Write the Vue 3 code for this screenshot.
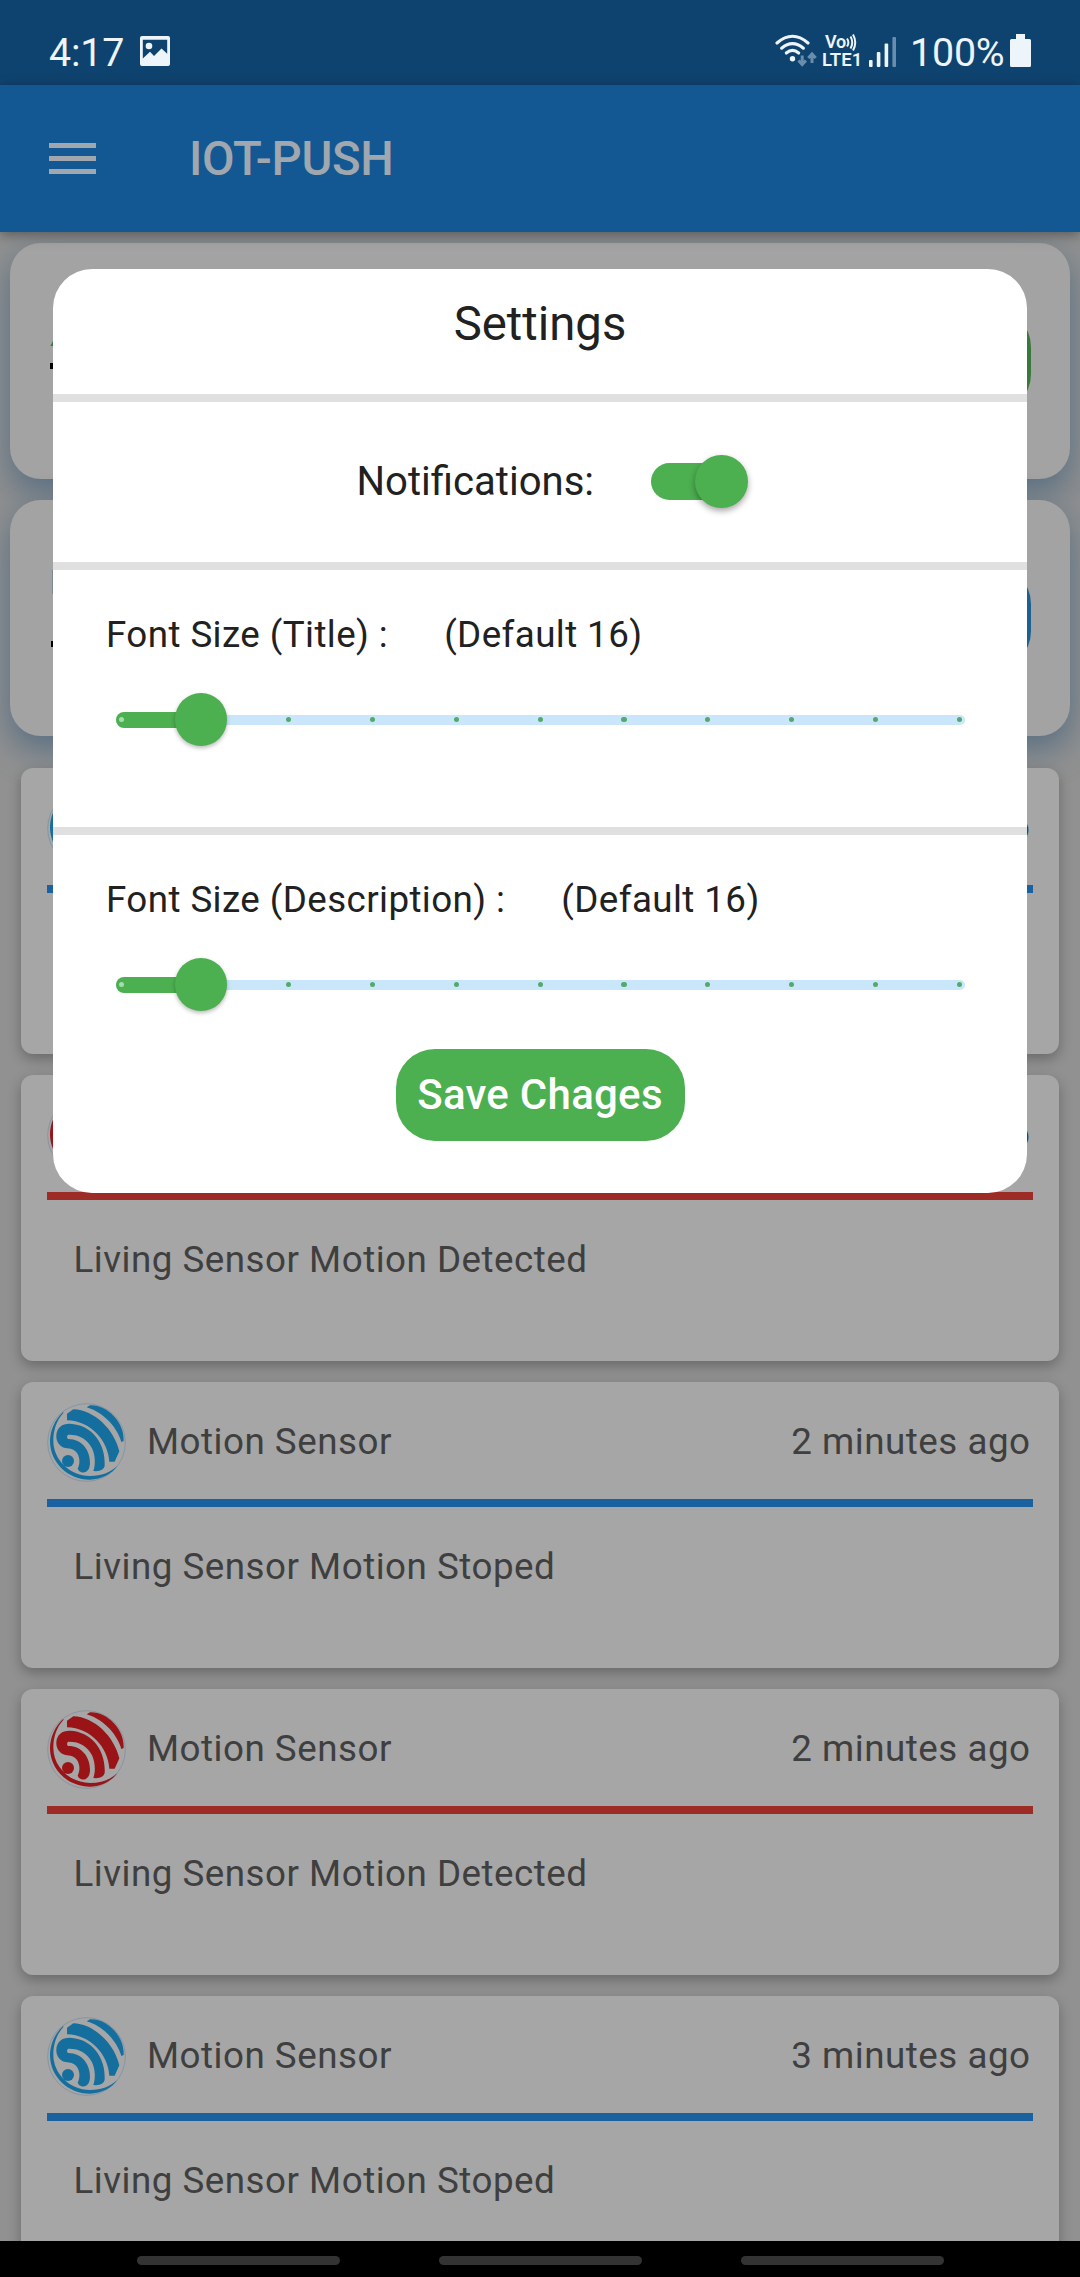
<script setup>
const events = [
  { tone: 'blue', ago: '1 minutes ago', text: 'Living Sensor Motion Stoped' },
  { tone: 'red', ago: '1 minutes ago', text: 'Living Sensor Motion Detected' },
  { tone: 'blue', ago: '2 minutes ago', text: 'Living Sensor Motion Stoped' },
  { tone: 'red', ago: '2 minutes ago', text: 'Living Sensor Motion Detected' },
  { tone: 'blue', ago: '3 minutes ago', text: 'Living Sensor Motion Stoped' },
]
const sliders = ['Title', 'Description']
</script>

<template>
  <div class="phone">
    <header class="status">
      <span class="clock">4:17</span>
      <svg class="photo" viewBox="0 0 30 30">
        <path fill-rule="evenodd" d="M2 0H28Q30 0 30 2V28Q30 30 28 30H2Q0 30 0 28V2Q0 0 2 0ZM2.8 3.8V22.5L10 15.8L14 20L21.5 12.5L27.2 17.8V3.8Z" />
        <circle cx="9" cy="10" r="3.3" />
      </svg>
      <span class="spacer" />
      <svg class="wifi" viewBox="0 0 42 34">
        <g fill="none" stroke="#edf4fa" stroke-width="3.1" stroke-linecap="round">
          <path d="M2 9Q17.500 -4.500 33 9" />
          <path d="M6.600 14.200Q17.500 5 28.400 14.200" />
          <path d="M11.300 19Q17.500 13.600 23.700 19" />
        </g>
        <circle cx="17.500" cy="24.800" r="2.700" fill="#edf4fa" />
        <g fill="none" stroke="#6a8dad" stroke-width="3">
          <path d="M27.200 21.500V30M23.500 26.500L27.200 30.500L30.900 26.500M37 29V20.500M33.300 24L37 20L40.700 24" />
        </g>
      </svg>
      <span class="volte">
        <span class="vo">Vo<svg viewBox="0 0 11 17"><path d="M1 4.500Q3.800 8.500 1 12.500M4.500 2.500Q8 8.500 4.500 14.500M7 .500Q11.500 8.500 7 16.500" /></svg></span>
        <span class="lte">LTE1</span>
      </span>
      <svg class="signal" viewBox="0 0 27 30">
        <rect x="0" y="23" width="3.600" height="7" rx="1" />
        <rect x="7.800" y="15" width="3.600" height="15" rx="1" />
        <rect x="15.600" y="6.500" width="3.600" height="23.500" rx="1" />
        <rect x="23.400" y="0" width="3.600" height="30" rx="1" fill="#6a8dad" />
      </svg>
      <span class="percent">100%</span>
      <svg class="battery" viewBox="0 0 21 33"><path d="M6 0H15V5H19.500Q21 5 21 6.500V31.500Q21 33 19.500 33H1.500Q0 33 0 31.500V6.500Q0 5 1.500 5H6Z" /></svg>
    </header>

    <nav class="appbar">
      <span class="menu"><i /><i /><i /></span>
      <h1>IOT-PUSH</h1>
    </nav>

    <main class="content">
      <section class="device">
        <span class="marks"><i class="tip" /><i class="dash" /></span>
        <span class="action green" />
      </section>
      <section class="device">
        <span class="marks second"><i class="bar" /><i class="dash" /></span>
        <span class="action azure" />
      </section>

      <article v-for="(e, i) in events" :key="i" class="event" :class="e.tone">
        <div class="head">
          <svg class="logo" viewBox="51 99 237 237">
            <circle cx="169.500" cy="217.500" r="116.500" fill="none" stroke="#7e91a2" stroke-width="2.400" />
            <g fill="currentColor">
              <path d="M100 125C73 150 60 183 60 215C61 277 113 329 180 329C215 328 245 312 262 288C240 308 215 318 180 318C118 317 70 268 70 212C70 181 79 152 100 129Z" />
              <path d="M170 112L180 106C230 103 284 156 281 213L274 216C265 180 226 128 170 112Z" />
              <path d="M111 131L130 118C193 120 253 179 268 244L254 275L238 275C234 211 182 153 111 151Z" />
              <path d="M79 197C80 171 99 160 120 161C185 164 228 220 224 288Q220 306 190 303C197 284 196 257 186 235C172 207 148 193 114 194Q108 201 114 207C154 206 182 240 180 283Q177 311 154 307Q146 305 143 296C151 280 149 264 143 252C134 237 121 236 106 234C90 231 78 215 79 197Z" />
              <circle cx="114" cy="273" r="18" />
            </g>
          </svg>
          <span class="name">Motion Sensor</span>
          <span class="ago">{{ e.ago }}</span>
        </div>
        <div class="rule" />
        <p>{{ e.text }}</p>
      </article>
    </main>

    <footer class="navbar"><i /><i /><i /></footer>

    <div class="dialog">
      <h2>Settings</h2>
      <div class="notify">
        <span>Notifications:</span>
        <span class="switch"><i /></span>
      </div>
      <div v-for="s in sliders" :key="s" class="size">
        <div class="caption"><span>Font Size ({{ s }}) :</span><span>(Default 16)</span></div>
        <div class="slider">
          <div class="active" />
          <div class="ticks"><i v-for="n in 11" :key="n" /></div>
          <div class="thumb" />
        </div>
      </div>
      <button>Save Chages</button>
    </div>
  </div>
</template>

<style>
body { margin: 0; }
</style>

<style scoped>
* { box-sizing: border-box; }
.phone {
  position: relative;
  display: flex;
  flex-direction: column;
  width: 1080px;
  height: 2277px;
  overflow: hidden;
  background: #919191;
  font-family: Roboto, sans-serif;
  white-space: nowrap;
}
i { display: block; }
svg { display: block; flex: none; }

.status {
  display: flex;
  align-items: flex-start;
  flex: none;
  height: 85px;
  padding: 0 49px 0 49px;
  background: #0f436f;
  color: #edf4fa;
  fill: #edf4fa;
  z-index: 2;
}
.clock { width: 73px; margin-top: 30px; font-size: 39.400px; line-height: 46px; letter-spacing: -.2px; }
.photo { width: 30px; height: 30px; margin: 36px 0 0 18px; }
.clock, .photo { flex: none; }
.spacer { flex: 1; }
.wifi { width: 42px; height: 34px; margin-top: 33.500px; }
.volte { display: flex; flex-direction: column; width: 40px; margin: 34px 0 0 5px; font-weight: 700; line-height: 17px; }
.vo { display: flex; padding-left: 3px; font-size: 18px; font-weight: 600; letter-spacing: -.3px; line-height: 16px; }
.vo svg { width: 11px; height: 17px; fill: none; stroke: #edf4fa; stroke-width: 2; }
.lte { font-size: 18.500px; font-weight: 600; line-height: 19px; }
.signal { width: 27px; height: 30px; margin: 36.500px 0 0 7px; }
.percent { width: 100px; margin: 30px 0 0 14px; font-size: 39.400px; line-height: 46px; letter-spacing: -.2px; }
.battery { width: 21px; height: 33px; margin-top: 34px; }

.appbar {
  display: flex;
  align-items: center;
  flex: none;
  height: 147px;
  padding-left: 49px;
  background: #145893;
  box-shadow: 0 3px 12px rgba(0, 0, 0, .38);
  z-index: 2;
}
.menu { display: grid; gap: 8px; width: 47px; }
.menu i { height: 5.200px; background: #a0a7ae; }
.appbar h1 { margin: 1px 0 0 93px; color: #a0a7ae; font-size: 47.250px; font-weight: 500; line-height: 56px; letter-spacing: -.35px; }

.content { display: flex; flex-direction: column; flex: 1; min-height: 0; padding-top: 10.500px; overflow: hidden; }
.device {
  display: flex;
  align-items: center;
  justify-content: space-between;
  flex: none;
  height: 236px;
  margin: 0 10.500px 21px 10.400px;
  padding: 0 39px 0 40px;
  border-radius: 31px;
  background: #a3a3a3;
  box-shadow: 0 13px 32px 2px rgba(70, 100, 125, .72);
}
.marks { display: flex; flex-direction: column; gap: 17px; width: 6px; margin-bottom: 13px; }
.marks.second { gap: 47px; margin-bottom: 18px; }
.tip { width: 6px; height: 7px; background: #3b7a3e; clip-path: polygon(60% 0, 100% 0, 100% 100%, 0 100%); }
.dash { width: 6px; height: 6px; background: #000; }
.second .dash { margin-left: 1px; }
.bar { width: 6px; height: 24px; margin-left: 1.500px; background: #7c8893; }
.action { width: 290px; height: 105px; border-radius: 39px; }
.action.green { background: #387a3b; }
.action.azure { background: #1c6192; }

.event {
  display: flex;
  flex-direction: column;
  flex: none;
  height: 286px;
  margin: 0 21px 21px;
  padding: 21px 26px;
  border-radius: 12px;
  background: #a6a6a6;
  box-shadow: 0 5px 13px rgba(0, 0, 0, .28);
  color: #3f3f3f;
  font-size: 36.750px;
  line-height: 43px;
  letter-spacing: .5px;
}
.device + .event { margin-top: 11px; }
.head { display: flex; align-items: center; height: 79px; }
.logo { width: 79px; height: 79px; }
.blue .logo { color: #156f9e; }
.red .logo { color: #991317; }
.name { flex: 1; margin: 0 0 1px 21px; }
.ago { margin: 0 2.500px 1px 0; }
.rule { height: 8px; margin-top: 17px; background: #19619f; }
.red .rule { background: #9c2c25; }
.event p { margin: 38.500px 0 0 26.500px; }

.navbar { display: flex; justify-content: center; gap: 99px; flex: none; height: 36px; padding-top: 15px; background: #000; z-index: 1; }
.navbar i { width: 203px; height: 9px; border-radius: 4.500px; background: #333; }

.dialog {
  position: absolute;
  z-index: 3;
  left: 53px;
  top: 269px;
  display: flex;
  flex-direction: column;
  width: 974px;
  height: 924px;
  border-radius: 39px;
  background: #fff;
  color: #212121;
}
.dialog h2 { height: 124.500px; margin: 0; padding-top: 27px; font-size: 47.250px; font-weight: 400; line-height: 56px; text-align: center; }
.notify { display: flex; align-items: center; height: 168px; padding: 0 0 0 303.500px; border-top: 8px solid #e0e0e0; font-size: 40.100px; line-height: 46px; }
.notify > span:first-child { width: 294px; }
.switch { display: flex; justify-content: flex-end; align-items: center; width: 90px; height: 36.500px; border-radius: 19px; background: #4caf50; }
.switch i { width: 52.500px; height: 52.500px; margin-right: -7px; border-radius: 50%; background: #4caf50; box-shadow: 0 3px 6px rgba(0, 0, 0, .35); flex: none; }
.size { height: 265px; padding: 43px 53px 0; border-top: 8px solid #e0e0e0; }
.caption { display: flex; gap: 56px; font-size: 36.750px; line-height: 43px; letter-spacing: .41px; }
.slider { position: relative; display: flex; align-items: center; height: 52px; margin: 38px 9.500px 0 10px; }
.slider::before { content: ''; flex: 1; height: 10px; border-radius: 5px; background: #cae6fb; }
.active { position: absolute; left: 0; width: 85px; height: 16px; border-radius: 8px; background: #4caf50; }
.ticks { position: absolute; left: 2.500px; right: 2.500px; display: flex; justify-content: space-between; }
.ticks i { width: 5.300px; height: 5.300px; border-radius: 50%; background: #53aa6c; }
.ticks i:first-child { background: #a7dcb0; }
.thumb { position: absolute; left: 58.500px; width: 52.500px; height: 52.500px; border-radius: 50%; background: #4caf50; box-shadow: 0 2px 4px rgba(0, 0, 0, .28); }
.dialog button {
  align-self: center;
  width: 289px;
  height: 92px;
  margin-top: -43px;
  padding: 0;
  border: 0;
  border-radius: 39px;
  background: #4caf50;
  color: #fff;
  font: 500 42px/50px Roboto, sans-serif;
  letter-spacing: .27px;
}
</style>
